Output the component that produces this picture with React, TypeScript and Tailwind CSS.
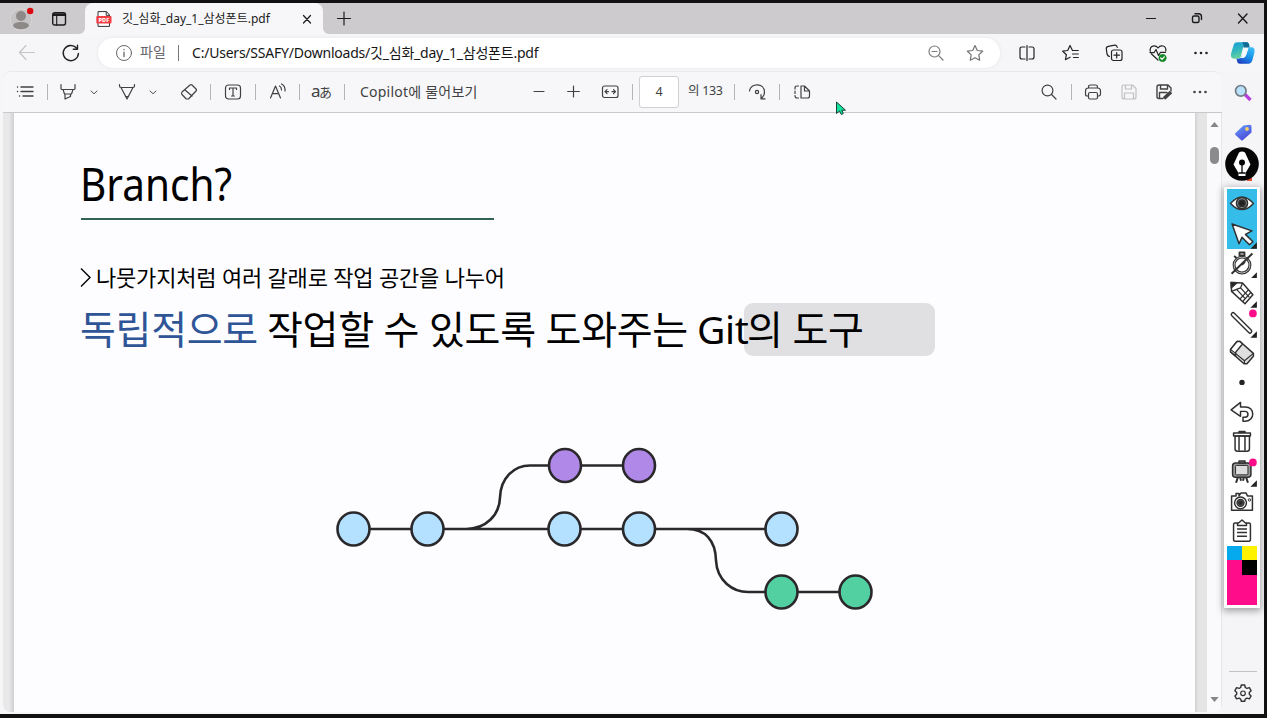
import React from "react";

type IconProps = { children: React.ReactNode; size?: string; box?: string; className?: string };

function Icon({ children, size = "h-5 w-5", box = "0 0 20 20", className = "" }: IconProps) {
  return (
    <svg
      viewBox={box}
      className={`shrink-0 ${size} ${className}`}
      fill="none"
      stroke="currentColor"
      strokeWidth="1.2"
      strokeLinecap="round"
      strokeLinejoin="round"
    >
      {children}
    </svg>
  );
}

function Sep({ className = "" }: { className?: string }) {
  return <div className={`h-4 w-px shrink-0 bg-[#b5b5b7] ${className}`} />;
}

function Dots({ className = "" }: { className?: string }) {
  return (
    <Icon className={className}>
      <g fill="currentColor" stroke="none">
        <circle cx="4.5" cy="10" r="1.3" />
        <circle cx="10" cy="10" r="1.3" />
        <circle cx="15.5" cy="10" r="1.3" />
      </g>
    </Icon>
  );
}

function Chevron({ className = "" }: { className?: string }) {
  return (
    <Icon size="h-2 w-2" box="0 0 8 8" className={className}>
      <path d="M1 3l3 2.800L7 3" strokeWidth="0.9" />
    </Icon>
  );
}

function TitleBar() {
  return (
    <div className="flex h-[31px] shrink-0 bg-[#cdcbce] text-[#1b1b1b]">
      <div className="flex w-[85px] bg-[#f7f7f9]">
        <div className="flex w-full items-center rounded-br-[6px] bg-[#cdcbce]">
          <svg viewBox="0 0 26 26" className="ml-2 h-[26px] w-[26px]">
            <circle cx="13" cy="13.5" r="10.8" fill="#c5c3c3" stroke="#d8d6d5" />
            <circle cx="13" cy="10" r="5" fill="#8d8989" />
            <path d="M5 20c0-5.500 16-5.500 16 0-3 4.400-13 4.400-16 0z" fill="#8d8989" />
            <circle cx="22.200" cy="5" r="3.200" fill="#d90a10" />
          </svg>
          <Icon size="h-4 w-4" box="0 0 16 16" className="ml-[17px]">
            <rect x="1.700" y="1.700" width="12.800" height="12.300" rx="2" strokeWidth="1.400" />
            <path d="M2 3.700h12.400" strokeWidth="2.600" strokeLinecap="butt" />
            <path d="M5.700 5v9" strokeWidth="1.100" />
          </Icon>
        </div>
      </div>
      <div className="flex w-[238px] items-center rounded-t-lg bg-[#f7f7f9]">
        <svg viewBox="0 0 16 16" className="ml-[11px] h-4 w-4 shrink-0">
          <path d="M2 .6h8.500L13.500 4v11.400H2z" fill="#fff" stroke="#333" strokeWidth="1" />
          <path d="M10.200.7v3.600h3.200" fill="none" stroke="#333" />
          <rect x=".3" y="5" width="15.200" height="7.500" rx="1" fill="#f13e44" />
          <text x="7.900" y="10.800" textAnchor="middle" fontSize="5.600" fontWeight="800" fill="#fff" fontFamily="Noto Sans, sans-serif">PDF</text>
        </svg>
        <span className="ml-[10px] w-[160px] whitespace-nowrap text-[12px] leading-4">깃_심화_day_1_삼성폰트.pdf</span>
        <Icon size="h-3 w-3" box="0 0 12 12" className="ml-[19px]">
          <path d="M2.500 2.500l7 7.500M9.500 2.500l-7 7.500" />
        </Icon>
      </div>
      <div className="flex flex-1 bg-[#f7f7f9]">
        <div className="flex flex-1 items-center rounded-bl-[6px] bg-[#cdcbce]">
          <Icon size="h-4 w-4" box="0 0 16 16" className="ml-[13px]">
            <path d="M1.500 7.500h13M8 1v13" />
          </Icon>
          <div className="flex-1" />
          <div className="mr-[13px] flex items-center gap-[30px]">
            <Icon size="h-4 w-4" box="0 0 16 16">
              <path d="M3.500 7.500h9" />
            </Icon>
            <Icon size="h-4 w-4" box="0 0 16 16">
              <rect x="3.500" y="5" width="6.500" height="6.500" rx="1.500" strokeWidth="1.400" />
              <path d="M6 2.800h3.500q3 0 3 3v2.700" strokeWidth="1.400" />
            </Icon>
            <Icon size="h-4 w-4" box="0 0 16 16">
              <path d="M3.500 3l8.500 9M12 3l-8.500 9" strokeWidth="1.400" />
            </Icon>
          </div>
        </div>
      </div>
    </div>
  );
}

function CopilotLogo() {
  return (
    <svg viewBox="0 0 26 26" className="ml-[24px] h-[26px] w-[26px] shrink-0">
      <defs>
        <linearGradient id="cpA" x1="0" y1="0" x2="0.300" y2="1">
          <stop offset="0" stopColor="#139dd9" />
          <stop offset="0.550" stopColor="#35b8bd" />
          <stop offset="1" stopColor="#68d39a" />
        </linearGradient>
        <linearGradient id="cpB" x1="0.900" y1="0" x2="0.300" y2="1">
          <stop offset="0" stopColor="#3fc2f3" />
          <stop offset="0.550" stopColor="#178fe9" />
          <stop offset="1" stopColor="#2041c4" />
        </linearGradient>
      </defs>
      <path d="M7.500 2.200h9c2 0 2.500 1.500 3 3.500h-4c-2 0-2.500 2-3 4l-1.500 6c-.7 2.200-1.500 3-3.500 3H4.500C1 18.700.5 15.800 1.300 12.700L3.500 5.500C4.100 3.300 5.300 2.200 7.500 2.200z" fill="url(#cpA)" />
      <path d="M12 2.200h4.500c2 0 2.500 1.500 3.200 5.300h-6.200c.7-2-.2-4-1.500-5.300z" fill="#126b96" />
      <path d="M18.500 7.300h3c3 0 3.600 2.700 2.800 5.700l-2 7.500c-.7 2-1.800 3.200-4 3.200H10c-2 0-2.600-1.300-3-3l-.5-2h1.500c2 0 2.800-.8 3.500-3h3c1 0 1.600-.6 2-2z" fill="url(#cpB)" />
      <path d="M14.200 8h4.300l-2.300 7q-.7 2.300-2.700 3h-3.300q1.200-1 1.700-3z" fill="#f2fafc" />
    </svg>
  );
}

function AddressBar() {
  return (
    <div className="flex h-[37px] shrink-0 items-center text-[#242424]">
      <Icon className="ml-[17px] text-[#c5c5c7]">
        <path d="M2.500 9.500h15M9 2.500l-6.500 7 6.500 7" />
      </Icon>
      <Icon className="ml-[24px]">
        <path d="M15.500 5A7.600 7.600 0 1 0 17.400 10.500M16.500 2.300v4h-4.200" strokeWidth="1.400" />
      </Icon>
      <div className="ml-[17px] flex h-[30px] w-[902px] items-center rounded-full bg-white shadow-[0_0_3px_1px_#ececef]">
        <Icon size="h-[18px] w-[18px]" box="0 0 18 18" className="ml-[17px] text-[#68686a]">
          <circle cx="9" cy="9" r="7.500" strokeWidth="1" />
          <path d="M9 8.200v4.300M9 5.500v.2" strokeWidth="1.300" />
        </Icon>
        <span className="ml-[7px] w-[32px] whitespace-nowrap text-[14px] leading-5 text-[#66666a]">
          <span className="relative -top-px">파일</span>
        </span>
        <div className="ml-[6px] h-4 w-px bg-[#777]" />
        <span className="ml-[13px] w-[360px] whitespace-nowrap text-[14px] tracking-[-0.22px] text-[#161616]">C:/Users/SSAFY/Downloads/깃_심화_day_1_삼성폰트.pdf</span>
        <Icon className="ml-[374px] text-[#7d7d80]">
          <circle cx="8.500" cy="8.500" r="5.500" />
          <path d="M12.600 12.600L17 17M6 8.500h5" />
        </Icon>
        <Icon className="ml-[19px] text-[#747478]">
          <path d="M10 2.500l2.300 5 5.300.7-3.800 3.700.9 5.300-4.700-2.500-4.700 2.500.9-5.300-3.800-3.700 5.300-.7z" />
        </Icon>
      </div>
      <Icon className="ml-[17px]">
        <path d="M8 4H5Q3 4 3 6v8q0 2 2 2h3M12 4h3q2 0 2 2v8q0 2-2 2h-3M10 2.500v15" />
      </Icon>
      <Icon className="ml-[24px]">
        <path d="M11.500 7.500L9 2.500 6.700 7.500l-5 .7 3.700 3.500-1 5 4.700-2.500M11.500 7.500h5.800M11.500 11h5.800M12.500 14.500h4.800" />
      </Icon>
      <Icon className="ml-[23px]">
        <rect x="7.500" y="7" width="10.500" height="10.500" rx="2" />
        <path d="M12.700 9.500V15M10 12.200h5.500M5.500 13.500Q3.500 13 3 11L2.300 6q-.3-2.200 2-2.600l6.500-1.200q2-.3 2.500 2.300" />
      </Icon>
      <Icon className="ml-[24px]">
        <path d="M2.200 8.300C1.500 2.200 7.500 1.500 10 5c2.500-3.500 8.500-2.800 7.800 3M3.500 11l6.500 6M2 9.700h4l2-3.200 2.500 6 2-3.200h5" />
        <circle cx="14.500" cy="15" r="3.700" fill="#16882a" stroke="#16882a" strokeWidth=".5" />
        <path d="M12.700 15l1.300 1.300 2.300-2.500" stroke="white" />
      </Icon>
      <Dots className="ml-[23px]" />
      <div className="-ml-[5px]"><CopilotLogo /></div>
    </div>
  );
}

function PdfToolbar() {
  return (
    <div className="flex h-[42px] shrink-0 items-center rounded-t-lg border-t border-b border-t-[#e9e9eb] border-b-[#c9c9cb] bg-[#f7f7f9] pb-px text-[#414141]">
      <Icon className="ml-3">
        <path d="M6 5h12M6 9.500h12M8 14h10M2.500 5h.1M2.500 9.500h.1M4.500 14h.1" strokeWidth="1.400" />
      </Icon>
      <Sep className="ml-3" />
      <Icon className="ml-[10px]">
        <path d="M3 2.500v4q0 1 1 1h12q1 0 1-1v-4M5 7.500l1.500 4.500h7L15 7.500M7 12v5l5.500-2.500V12" />
      </Icon>
      <Chevron className="ml-3" />
      <Icon className="ml-[19px]">
        <path d="M2.500 2.500v1.300q0 1.700 1.500 1.700h12q1.500 0 1.500-1.700V2.500M4 5.500L10 17l6-11.500M8.500 14.500h3" />
      </Icon>
      <Chevron className="ml-3" />
      <Icon className="ml-[22px]">
        <path d="M3 10l8-7q1-.8 2 0l4 4q1 1 0 2l-7.500 8H7.300L3 12.500Q2 11.300 3 10zM6 8l7 6" />
      </Icon>
      <Sep className="ml-[11px]" />
      <Icon className="ml-3">
        <rect x="2.500" y="3" width="15" height="14" rx="3" />
        <path d="M6.500 7.500V6h7v1.500M10 6v8M8.500 14h3" />
      </Icon>
      <Sep className="ml-3" />
      <Icon className="ml-3">
        <path d="M2.500 16L7.500 4l5 12M4.200 11.700h6.600M11.500 4q2 1 2 4M13.500 2q4 2 3.500 7" />
      </Icon>
      <Sep className="ml-[11px]" />
      <span className="ml-[11px] flex w-[21px] items-baseline whitespace-nowrap text-[17px] leading-5">
        <span className="w-[8px]">a</span>
        <span className="text-[13px]">あ</span>
      </span>
      <Sep className="ml-3" />
      <span className="ml-[15px] w-[119px] whitespace-nowrap text-[14px] tracking-[0.22px]">Copilot에 물어보기</span>
      <Icon className="ml-[50px]">
        <path d="M5 9.500h10" />
      </Icon>
      <Icon className="ml-[14px]">
        <path d="M4.700 9.500h11.600M10.500 4v11" />
      </Icon>
      <Icon className="ml-[17px]">
        <rect x="2.500" y="4" width="15.500" height="11.500" rx="2" />
        <path d="M8.500 9.700H5.200M7 7.700l-2 2 2 2M12 9.700h3.300M13.500 7.700l2 2-2 2" />
      </Icon>
      <Sep className="ml-3" />
      <div className="ml-[6px] flex h-8 w-10 shrink-0 items-center justify-center rounded-[3px] border border-[#d0d0d2] bg-white pt-px text-[12.500px]">4</div>
      <span className="ml-[9px] w-9 whitespace-nowrap text-[12.500px] tracking-[-0.3px]">의 133</span>
      <Sep className="ml-[10px]" />
      <Icon className="ml-3">
        <path d="M2.500 9C3.500.5 17.500.7 17.500 10q0 4-3.500 6.500M14 12.700v4.200h4" />
        <circle cx="10" cy="10" r="1.600" />
      </Icon>
      <Sep className="ml-3" />
      <Icon className="ml-3">
        <path d="M9 4v12h6.500q2 0 2-2V9l-5-5zM12.500 4v5h5M6.500 4H5Q3 4 3 6v1M3 9v2.500M3 13.500q0 2.500 2 2.500h1.500" />
      </Icon>
      <Icon className="ml-[227px]">
        <circle cx="8.500" cy="8.500" r="5.400" />
        <path d="M12.500 12.500L17 17" />
      </Icon>
      <Sep className="ml-3" />
      <Icon className="ml-[11px]">
        <path d="M5.500 6V5q0-2 2-2h5q2 0 2 2v1M5.500 14H4.200Q2.500 14 2.500 12V9q0-3 3-3h9q3 0 3 3v3q0 2-1.700 2h-1.300" />
        <rect x="5.500" y="10.500" width="9" height="6.500" rx="1.500" />
      </Icon>
      <Icon className="ml-4 text-[#c0c0c3]">
        <path d="M5 3h8.500L17 6.500V15q0 2-2 2H5q-2 0-2-2V5q0-2 2-2zM6.500 3v4h6V3M5.500 17v-6h9v6" />
      </Icon>
      <Icon className="ml-[15px]">
        <path d="M9 16.500H5q-2 0-2-2V5q0-2 2-2h9l3 3v3M6.500 3v4h7V3M5.500 16.500v-6H13" strokeWidth="1.400" />
        <path d="M10 16.500l7-6.500" strokeWidth="3.600" strokeLinecap="butt" />
      </Icon>
      <Dots className="ml-4" />
    </div>
  );
}

function BranchGraph() {
  const nodes: [number, number, string][] = [
    [57.5, 99, "#b3e1ff"],
    [131.5, 99, "#b3e1ff"],
    [268.5, 99, "#b3e1ff"],
    [343, 99, "#b3e1ff"],
    [485.5, 99, "#b3e1ff"],
    [269, 35.5, "#b088e8"],
    [343, 35.5, "#b088e8"],
    [485.5, 162, "#52d0a1"],
    [559.5, 162, "#52d0a1"],
  ];
  return (
    <svg viewBox="0 0 600 190" className="mt-[74px] ml-[216px] h-[190px] w-[600px]" fill="none" stroke="#2a282b" strokeWidth="2.600">
      <path d="M57 99H485M170 99C190 99 203.500 85 204 67.500C204.500 48 218 35.500 234 35.500H343M391 99C409 99 419.500 110 420 130.500C421 151 437 162 452 162H559" />
      {nodes.map(([x, y, fill]) => (
        <ellipse key={`${x}-${y}`} cx={x} cy={y} rx="16" ry="16.500" fill={fill} />
      ))}
    </svg>
  );
}

function Slide() {
  return (
    <div className="flex flex-1 flex-col bg-[#fdfdff] pl-[66px] text-black">
      <div className="mt-[36px] h-[69px] w-[415px] font-['Noto_Sans']">
        <h1 className="w-max origin-left scale-x-[0.88] whitespace-nowrap text-[46px] leading-[68px] font-normal">Branch?</h1>
      </div>
      <div className="ml-px h-[2px] w-[413px] bg-[#326551]" />
      <div className="mt-[42px] flex h-[30px] items-center whitespace-nowrap">
        <svg viewBox="0 0 12 20" className="h-5 w-3" fill="none" stroke="black" strokeWidth="1.400">
          <path d="M1 1.500l9 9-9 9" />
        </svg>
        <span className="ml-[4px] text-[22px] tracking-[-0.18px]">나뭇가지처럼 여러 갈래로 작업 공간을 나누어</span>
      </div>
      <div className="mt-[11px] flex h-[53px] items-center whitespace-nowrap text-[39px] leading-[51px] tracking-[-0.3px]">
        <span className="-mt-[2px] w-[187px] text-[#2f5597]">독립적으로</span>
        <span className="-mt-[2px] w-[430px]">작업할 수 있도록 도와주는</span>
        <span className="z-10 -mt-[2px] w-[47px]">Git</span>
        <span className="flex h-[53px] w-[191px] items-center rounded-[9px] bg-[#e0e0e2] pb-[2px] pl-[3px]">의 도구</span>
      </div>
      <BranchGraph />
    </div>
  );
}

function Arrow({ up = false }: { up?: boolean }) {
  return (
    <svg viewBox="0 0 10 6" className="h-[5px] w-[9px]" fill="#858588">
      <path d={up ? "M5 0l5 6H0z" : "M0 0h10L5 6z"} />
    </svg>
  );
}

function Sidebar() {
  return (
    <div className="flex w-[42px] shrink-0 flex-col items-center bg-[#f5f5f7]">
      <svg viewBox="0 0 20 20" className="mt-[12px] h-5 w-5" fill="none">
        <path d="M12 11.500l5.500 5.500" stroke="#b53cdf" strokeWidth="3.200" />
        <circle cx="7.800" cy="7.800" r="5.300" fill="#b9e1fa" stroke="#747b83" strokeWidth="1.700" />
      </svg>
      <svg viewBox="0 0 20 20" className="mt-[20px] h-5 w-5">
        <defs>
          <linearGradient id="tag" x1="0" y1="0" x2="0.600" y2="1">
            <stop stopColor="#65a3ff" />
            <stop offset="1" stopColor="#4b48d5" />
          </linearGradient>
        </defs>
        <path d="M10.500 2.500l6-.8q2-.2 2 1.800v6L10 17q-1 1-2 0l-5.500-5q-1-1 0-2z" fill="url(#tag)" />
        <circle cx="14" cy="6" r="1.900" fill="#f5cf66" />
      </svg>
      <div className="flex-1" />
      <div className="h-px w-7 bg-[#c2c2c4]" />
      <Icon size="h-5 w-5" className="mt-[11px] mb-[11px] text-[#333]">
        <path d="M8.300 2h3.400l.6 2.500 1.600.9 2.500-.7 1.700 3-1.800 1.700v1.800l1.800 1.700-1.700 3-2.500-.7-1.600.9-.6 2.200H8.300l-.6-2.200-1.600-.9-2.500.7-1.700-3 1.800-1.700V9.400L1.900 7.700l1.700-3 2.500.7 1.600-.9z" strokeWidth="1.400" />
        <circle cx="10" cy="10.300" r="2.300" />
      </Icon>
    </div>
  );
}

const tools: { key: string; more?: boolean; pink?: boolean; art: React.ReactNode }[] = [
  {
    key: "eye",
    art: (
      <>
        <path d="M3.500 14.500Q15 1.500 26.500 14.500 15 27 3.500 14.500z" fill="white" />
        <circle cx="15" cy="14.300" r="5.600" fill="#8a8e92" />
        <circle cx="15" cy="14.300" r="3.200" fill="#222" />
      </>
    ),
  },
  {
    key: "cursor",
    more: true,
    art: <path d="M5 5l20 7-6.500 3.500 7.500 7.500-3.500 3-7.500-7.500-3 6.500z" fill="white" />,
  },
  {
    key: "timer",
    more: true,
    art: (
      <>
        <circle cx="15" cy="16.200" r="8" fill="white" strokeWidth="3" />
        <circle cx="15" cy="16.200" r="8" stroke="#bbb" strokeWidth="1" />
        <path d="M12.500 3.500h5v3h-5zM7 7l2.500 2M23 7l-2.500 2M15 16l3-3M4.500 25L25.500 4.500" strokeWidth="1.900" />
      </>
    ),
  },
  {
    key: "pencil",
    more: true,
    art: (
      <>
        <path d="M4 4.500l11.500.5L26 17l-8 9L4.500 13.500z" fill="white" />
        <path d="M15.500 5l-2 5-4 1.500-5 2M13.500 10l9 9.500M9.500 11.500l9 9.500M21.500 12L13 21M24 14.500l-8.500 9.500" strokeWidth="1.300" />
        <path d="M4 4.500l6 .3-5.700 5z" fill="#222" />
      </>
    ),
  },
  {
    key: "line",
    more: true,
    pink: true,
    art: (
      <>
        <path d="M6 6.500l17 17" strokeWidth="5" strokeLinecap="round" />
        <path d="M6 6.500l17 17" stroke="white" strokeWidth="2.200" strokeLinecap="round" />
      </>
    ),
  },
  {
    key: "eraser",
    art: (
      <>
        <path d="M10 3.500h3L26.500 15.500v3L20 26h-3L3.500 14v-2.500z" fill="#e0e0e0" />
        <path d="M10 3.500h3L15.500 6l-7 8.500v3.500L3.500 14v-2.500z" fill="white" />
        <path d="M3.500 11.500L17.500 23l9-7.500M17.500 23v3" strokeWidth="1.200" />
      </>
    ),
  },
  { key: "size", art: <circle cx="15" cy="14.500" r="2" fill="#222" stroke="#222" /> },
  {
    key: "undo",
    art: <path d="M4 13L13.500 5.500v4.500h5c9.500 0 10 14 0 14.500H16v-4h2c4 0 4-6 0-6h-4.500v5z" fill="white" />,
  },
  {
    key: "trash",
    art: (
      <>
        <path d="M8 9h14.500v13q0 2.500-2.500 2.500h-9.500Q8 24.500 8 22z" fill="white" />
        <path d="M12 6V4.500h6V6M6.500 6h17v3h-17zM12 9v15M18 9v15" />
      </>
    ),
  },
  {
    key: "board",
    more: true,
    pink: true,
    art: (
      <>
        <path d="M11 20l-2 6M19 20l2 6M13 20l1 4M17 20l-1 4" strokeWidth="2" />
        <rect x="5.500" y="6" width="18.500" height="14.500" rx="3" fill="#999" />
        <rect x="8.500" y="8.500" width="12.500" height="9.500" rx="1" fill="#ddd" strokeWidth="1" />
        <path d="M12 4h6v2h-6z" fill="#999" />
      </>
    ),
  },
  {
    key: "camera",
    art: (
      <>
        <path d="M4.500 9H9V6.500h3V9l2-3h5l1.500 3h5v14.500h-21z" fill="white" />
        <circle cx="13.500" cy="16" r="6" fill="white" />
        <circle cx="13.500" cy="16" r="3.500" fill="#999" />
        <circle cx="13.500" cy="16" r="1.800" fill="#222" />
        <circle cx="22.500" cy="13" r="1.200" strokeWidth="1" />
      </>
    ),
  },
  {
    key: "clipboard",
    art: (
      <>
        <path d="M8 7h3.500l3.500-3 3.500 3H22q1.500 0 1.500 1.500v15q0 2-1.500 2H8q-1.500 0-1.500-2v-15Q6.500 7 8 7z" fill="white" />
        <path d="M10.500 7v2.500h9V7M10 13h10M10 16.700h10M10 20.500h10" />
      </>
    ),
  },
];

function DrawingPalette() {
  return (
    <div className="absolute top-[147px] left-[1224px] flex w-9 flex-col items-center">
      <svg viewBox="0 0 34 34" className="h-[34px] w-[34px]">
        <path d="M22 31h5v3h-5z" fill="#e65035" />
        <circle cx="17" cy="17" r="16.800" fill="#050505" />
        <path d="M14 5.500q3-2 6 0l5.500 12L20.500 26v3h-7v-3L8.500 17.500z" fill="white" />
        <path d="M13.500 26h7M17 16v10" stroke="#050505" strokeWidth="1.300" />
        <circle cx="17" cy="15.500" r="3" fill="#050505" />
      </svg>
      <div className="mt-[6px] flex w-9 flex-col border-[3px] border-t-2 border-white bg-white shadow-[0_2px_7px_1px_rgba(0,0,0,0.35)]">
        {tools.map((tool, i) => (
          <div key={tool.key} className={`h-[29.75px] ${i < 2 ? "bg-[#35bce8]" : "bg-white"}`}>
            <svg viewBox="0 0 30 30" className="h-full w-full" fill="none" stroke="#303030" strokeWidth="1.500" strokeLinejoin="round">
              {tool.art}
              {tool.more && <path d="M30 23.500V30h-6.500z" fill="#222" stroke="none" />}
              {tool.pink && <circle cx="26" cy="5.500" r="3.900" fill="#ff0c8b" stroke="none" />}
            </svg>
          </div>
        ))}
        <div className="grid h-[59px] grid-cols-2 grid-rows-[14px_15px_30px]">
          <div className="bg-[#05a9ee]" />
          <div className="bg-[#fff200]" />
          <div className="bg-[#ff0c8b]" />
          <div className="bg-black" />
          <div className="col-span-2 bg-[#ff0c8b]" />
        </div>
      </div>
    </div>
  );
}

export default function App() {
  return (
    <div className="relative h-[718px] w-[1267px] overflow-hidden bg-[#121112] pt-[3px] pr-[3px] pb-[4px] font-['Noto_Sans','Noto_Sans_CJK_KR',sans-serif]">
      <div className="flex h-full flex-col bg-[#f6f6f8]">
        <TitleBar />
        <AddressBar />
        <div className="flex min-h-0 flex-1">
          <div className="mb-[2px] ml-[3px] flex w-[1219px] shrink-0 flex-col overflow-hidden rounded-b-lg">
            <PdfToolbar />
            <div className="flex min-h-0 flex-1">
              <div className="w-[11px] shrink-0 bg-linear-to-r from-[#e8e8e9] from-55% to-[#cfcfd1]" />
              <Slide />
              <div className="w-[12px] shrink-0 bg-linear-to-r from-[#d2d2d3] to-[#e5e5e6] to-30%" />
              <div className="flex w-[15px] shrink-0 flex-col items-center border-r border-[#e6e6e8] bg-[#fafafc]">
                <div className="mt-[9px] flex"><Arrow up /></div>
                <div className="mt-[20px] h-[17px] w-[9px] rounded-full bg-[#8b8b8e]" />
                <div className="flex-1" />
                <div className="mb-[10px] flex"><Arrow /></div>
              </div>
            </div>
          </div>
          <Sidebar />
        </div>
      </div>
      <DrawingPalette />
      <svg viewBox="0 0 12 15" className="absolute top-[101px] left-[835px] h-[15px] w-3">
        <path d="M1.500 1v11.500l3-2.500 1.800 3.500 2-1-1.500-3.300h3.700z" fill="#12e3a0" stroke="#193e32" strokeWidth="1" />
      </svg>
    </div>
  );
}
